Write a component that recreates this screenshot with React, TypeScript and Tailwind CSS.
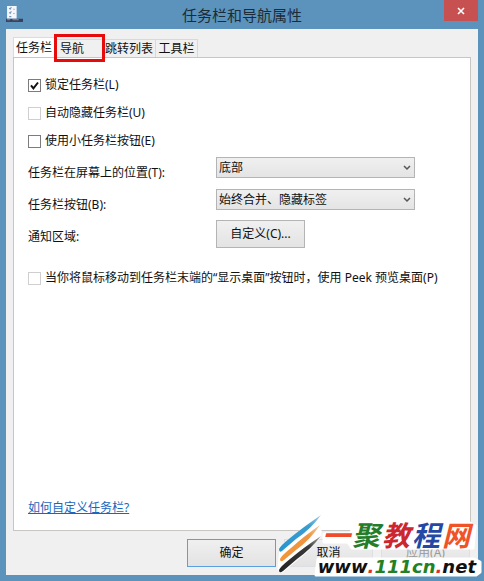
import type { ReactNode } from 'react';

const tabs = ['任务栏', '导航', '跳转列表', '工具栏'];

const buttonBase = 'h-7 w-[89px] border bg-gradient-to-b from-[#f0f0f0] to-[#e3e3e3]';

interface CheckRowProps {
  id: string;
  label: string;
  checked?: boolean;
  faint?: boolean;
}

function CheckRow({ id, label, checked, faint }: CheckRowProps) {
  return (
    <div className="flex h-7 items-center gap-1">
      <span className="relative flex">
        <input
          id={id}
          type="checkbox"
          defaultChecked={checked}
          className={`peer size-[13px] appearance-none border bg-white ${faint ? 'border-[#cfcfcf]' : 'border-[#7c7c7c]'}`}
        />
        <svg
          viewBox="0 0 13 13"
          className="pointer-events-none absolute inset-0 hidden size-[13px] peer-checked:block"
        >
          <path d="M3 6.3 L5.4 9.3 L10 3.5" fill="none" stroke="#111" strokeWidth="2" />
        </svg>
      </span>
      <label htmlFor={id} className="whitespace-nowrap">{label}</label>
    </div>
  );
}

interface SelectRowProps {
  id: string;
  label: string;
  value: string;
}

function SelectRow({ id, label, value }: SelectRowProps) {
  return (
    <div className="flex h-8 items-start">
      <label htmlFor={id} className="w-[188px] leading-9">{label}</label>
      <span className="relative mt-0.5 flex w-[199px]">
        <select
          id={id}
          className="h-[21px] w-full appearance-none border border-[#b4b4b4] bg-gradient-to-b from-[#f0f0f0] to-[#e4e4e4] pl-0.5 leading-4"
        >
          <option>{value}</option>
        </select>
        <svg viewBox="0 0 8 6" className="pointer-events-none absolute top-2 right-1 h-[6px] w-2">
          <path d="M1 1 L4 4 L7 1" fill="none" stroke="#555" strokeWidth="1.5" />
        </svg>
      </span>
    </div>
  );
}

function Tint({ color, children }: { color: string; children: ReactNode }) {
  return <span className={color}>{children}</span>;
}

function Watermark() {
  return (
    <div className="pointer-events-none absolute right-0 bottom-0 h-[70px] w-[208px]">
      <svg viewBox="0 0 208 70" className="absolute inset-0 h-full w-full">
        <defs>
          <linearGradient id="blueStroke" x1="0" y1="1" x2="1" y2="0">
            <stop offset="0" stopColor="#2795cf" />
            <stop offset="0.7" stopColor="#3a9ccf" />
            <stop offset="1" stopColor="#a8cfe2" />
          </linearGradient>
          <linearGradient id="orangeStroke" x1="0" y1="1" x2="1" y2="0">
            <stop offset="0" stopColor="#f3963a" />
            <stop offset="0.7" stopColor="#ee9340" />
            <stop offset="1" stopColor="#f3cfa2" />
          </linearGradient>
          <linearGradient id="blackStroke" x1="0" y1="1" x2="1" y2="0">
            <stop offset="0" stopColor="#222" />
            <stop offset="0.7" stopColor="#3a3a3a" />
            <stop offset="1" stopColor="#aaa" />
          </linearGradient>
        </defs>
        <g fill="#fff" stroke="#fff" strokeWidth="3" strokeLinejoin="round">
          <path d="M5 36 L44 5 V25 L30 40 L6 60 L3 58 Z" />
          <path d="M48 23 H74 L80 11 H192 L199 15 L197 37 H76 L72 31 H48 Z" />
          <path d="M42 48 H198 L204 51 V61 L200 64 H40 Z" />
        </g>
        <path d="M3 38 Q4 35 14 27 Q26 17 45 4 Q35 18 20 28 L6 40 Q3 42 3 38 Z" fill="url(#blueStroke)" />
        <path d="M4 48 Q5 45 15 37 Q27 26 44 14 Q34 29 20 39 L8 49 Q4 52 4 48 Z" fill="url(#orangeStroke)" />
        <path d="M3 59 Q4 56 14 48 Q27 37 45 25 Q35 38 21 48 L7 60 Q3 63 3 59 Z" fill="url(#blackStroke)" />
      </svg>
      <div className="absolute right-[14px] bottom-[29px] flex gap-0.5 font-['Noto_Sans_CJK_SC',sans-serif] text-[28px] leading-[36px] font-bold italic">
        <Tint color="text-[#ee4c2c]">一</Tint>
        <Tint color="text-[#237d2b]">聚</Tint>
        <Tint color="text-[#cc2630]">教</Tint>
        <Tint color="text-[#2448a4]">程</Tint>
        <Tint color="text-[#f05328]">网</Tint>
      </div>
      <div className="absolute right-2 bottom-1 flex font-['DejaVu_Sans',sans-serif] text-[18px] leading-5 font-bold italic">
        <Tint color="text-[#111]">www</Tint>
        <Tint color="text-[#dc3030]">.</Tint>
        <Tint color="text-[#238023]">111cn</Tint>
        <Tint color="text-[#dc3030]">.</Tint>
        <Tint color="text-[#111]">net</Tint>
      </div>
    </div>
  );
}

export default function App() {
  return (
    <div className="relative flex min-h-screen flex-col bg-[#5b93bc] px-1.5 pb-1.5 font-['Noto_Sans','Noto_Sans_CJK_SC',sans-serif] text-[12px] leading-4 text-[#111]">
      <header className="relative flex h-[29px] items-center justify-center">
        <svg viewBox="0 0 16 16" className="absolute top-1.5 left-0 size-[17px]">
          <rect x="1" y="0" width="9" height="12" fill="#f3f7fb" />
          <path d="M3 2 L4 3 L5 1 M3 6 L4 7 L5 5 M3 10 H5 M7 3 H8 M7 7 H8" fill="none" stroke="#7295bd" />
          <path d="M0 12 H16 V15 H0 Z" fill="#34405c" />
          <path d="M1 13 H4 M6 13 H12" stroke="#8a91a8" />
        </svg>
        <h1 className="text-[15px] leading-5 text-[#1b2b38]">任务栏和导航属性</h1>
        <button
          type="button"
          aria-label="关闭"
          className="absolute top-0 right-0 flex h-[21px] w-[34px] items-center justify-center bg-[#c75050]"
        >
          <svg viewBox="0 0 8 8" className="size-2">
            <path d="M1 1 L7 7 M7 1 L1 7" stroke="#fff" strokeWidth="1.6" />
          </svg>
        </button>
      </header>

      <main className="flex flex-1 flex-col bg-[#f0f0f0] px-[7px] pt-2 pb-2">
        <nav className="flex h-5 items-end">
          {tabs.map((tab, index) => (
            <button
              key={tab}
              type="button"
              className={
                index === 0
                  ? 'h-5 w-[42px] border border-b-0 border-[#dcdcdc] bg-white text-center whitespace-nowrap'
                  : index === 1
                    ? 'relative h-[18px] w-12 border border-b-0 border-[#d9d9d9] pl-1 text-left'
                    : index === 2
                      ? 'h-[18px] w-[53px] border border-b-0 border-l-0 border-[#d9d9d9] text-center whitespace-nowrap'
                      : 'h-[18px] w-[42px] border border-b-0 border-l-0 border-[#d9d9d9] text-center whitespace-nowrap'
              }
            >
              {tab}
              {index === 1 && (
                <span className="absolute -top-1.5 -left-[2px] h-7 w-[51px] border-3 border-[#e60c0c]" />
              )}
            </button>
          ))}
        </nav>

        <section className="flex flex-1 flex-col border border-[#c8c6c2] bg-white px-3.5 pt-[13px] pb-3.5">
          <CheckRow id="lock" label="锁定任务栏(L)" checked />
          <CheckRow id="hide" label="自动隐藏任务栏(U)" faint />
          <CheckRow id="small" label="使用小任务栏按钮(E)" />

          <SelectRow id="position" label="任务栏在屏幕上的位置(T):" value="底部" />
          <SelectRow id="combine" label="任务栏按钮(B):" value="始终合并、隐藏标签" />
          <div className="flex h-8 items-start">
            <label htmlFor="custom" className="w-[188px] leading-9">通知区域:</label>
            <button id="custom" type="button" className={`${buttonBase} mt-px border-[#b4b4b4]`}>
              自定义(C)...
            </button>
          </div>

          <div className="mt-[13px]">
            <CheckRow id="peek" label="当你将鼠标移动到任务栏末端的“显示桌面”按钮时，使用 Peek 预览桌面(P)" faint />
          </div>

          <a href="#help" className="mt-auto self-start text-[#1b66bd] underline">如何自定义任务栏?</a>
        </section>

        <footer className="flex justify-end gap-2 pt-2 pr-px">
          <button type="button" className={`${buttonBase} border-[#5a9fe0]`}>确定</button>
          <button type="button" className={`${buttonBase} border-[#dcdfe3]`}>取消</button>
          <button type="button" disabled className={`${buttonBase} border-[#dfdfdf] text-[#999]`}>应用(A)</button>
        </footer>
      </main>

      <Watermark />
    </div>
  );
}
